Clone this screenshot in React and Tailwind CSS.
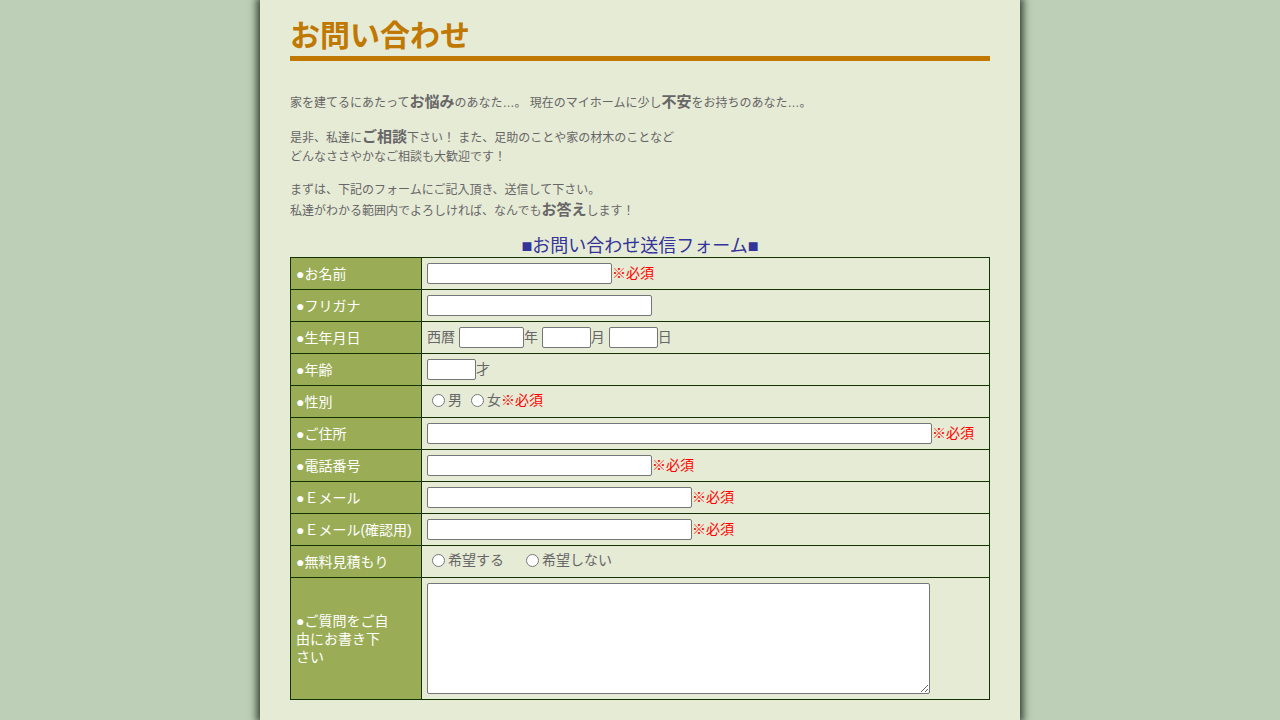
import React from 'react';

const font = { fontFamily: '"Liberation Sans", "Noto Sans CJK JP", sans-serif' };

const Req = () => <span className="text-[#ff0000]">※必須</span>;

const Input = ({ w }) => (
    <input type="text" className={`${w} h-[21px] bg-white border border-[#767676] rounded-[2px] align-middle`} />
);

const Row = ({ label, children, tall }) => (
    <tr className={tall ? 'h-[122px]' : 'h-[32px]'}>
        <th className="w-[131px] bg-[#9aad56] border border-[#133300] text-left font-normal text-white text-[14px] px-[5px] align-middle leading-[18px]">
            {label}
        </th>
        <td className="border border-[#133300] px-[5px] text-[14px] text-[#666] align-middle">
            {children}
        </td>
    </tr>
);

const App = () => {
    return (
        <div className="min-h-[720px] bg-[#bdd0b7] flex justify-center" style={font}>
            <div className="w-[760px] bg-[#e6ebd6] px-[30px] pt-[16px] pb-[20px] shadow-[0_0_8px_3px_rgba(20,30,20,0.85)]">
                {/* heading */}
                <h1 className="text-[30px] leading-[40px] text-[#c07800] font-bold border-b-[5px] border-[#c07800]">お問い合わせ</h1>

                <div className="text-[12px] text-[#666] mt-[31px] leading-[19px]">
                    <p>家を建てるにあたって<b className="text-[15px]">お悩み</b>のあなた…。 現在のマイホームに少し<b className="text-[15px]">不安</b>をお持ちのあなた…。</p>
                    <p className="mt-[14px]">是非、私達に<b className="text-[15px]">ご相談</b>下さい！ また、足助のことや家の材木のことなど<br />どんなささやかなご相談も大歓迎です！</p>
                    <p className="mt-[14px]">まずは、下記のフォームにご記入頂き、送信して下さい。<br />私達がわかる範囲内でよろしければ、なんでも<b className="text-[15px]">お答え</b>します！</p>
                </div>

                <h2 className="text-center text-[18px] leading-[22px] text-[#333399] mt-[14px]">■お問い合わせ送信フォーム■</h2>

                <table className="w-[700px] border-collapse">
                    <tbody>
                        <Row label="●お名前"><Input w="w-[185px]" /><Req /></Row>
                        <Row label="●フリガナ"><Input w="w-[225px]" /></Row>
                        <Row label="●生年月日">
                            西暦 <Input w="w-[65px]" />年 <Input w="w-[49px]" />月 <Input w="w-[49px]" />日
                        </Row>
                        <Row label="●年齢"><Input w="w-[49px]" />才</Row>
                        <Row label="●性別">
                            <span className="inline-flex items-center">
                                <input type="radio" name="sex" className="w-[13px] h-[13px] ml-[5px] mr-[3px]" />男
                                <input type="radio" name="sex" className="w-[13px] h-[13px] ml-[9px] mr-[3px]" />女<Req />
                            </span>
                        </Row>
                        <Row label="●ご住所"><Input w="w-[505px]" /><Req /></Row>
                        <Row label="●電話番号"><Input w="w-[225px]" /><Req /></Row>
                        <Row label="●Ｅメール"><Input w="w-[265px]" /><Req /></Row>
                        <Row label="●Ｅメール(確認用)"><Input w="w-[265px]" /><Req /></Row>
                        <Row label="●無料見積もり">
                            <span className="inline-flex items-center">
                                <input type="radio" name="est" className="w-[13px] h-[13px] ml-[5px] mr-[3px]" />希望する
                                <input type="radio" name="est" className="w-[13px] h-[13px] ml-[22px] mr-[3px]" />希望しない
                            </span>
                        </Row>
                        <Row label={<span className="block w-[96px]">●ご質問をご自由にお書き下さい</span>} tall>
                            <textarea className="block w-[503px] h-[111px] bg-white border border-[#767676] rounded-[2px]" />
                        </Row>
                    </tbody>
                </table>
            </div>
        </div>
    );
};

export default App;
